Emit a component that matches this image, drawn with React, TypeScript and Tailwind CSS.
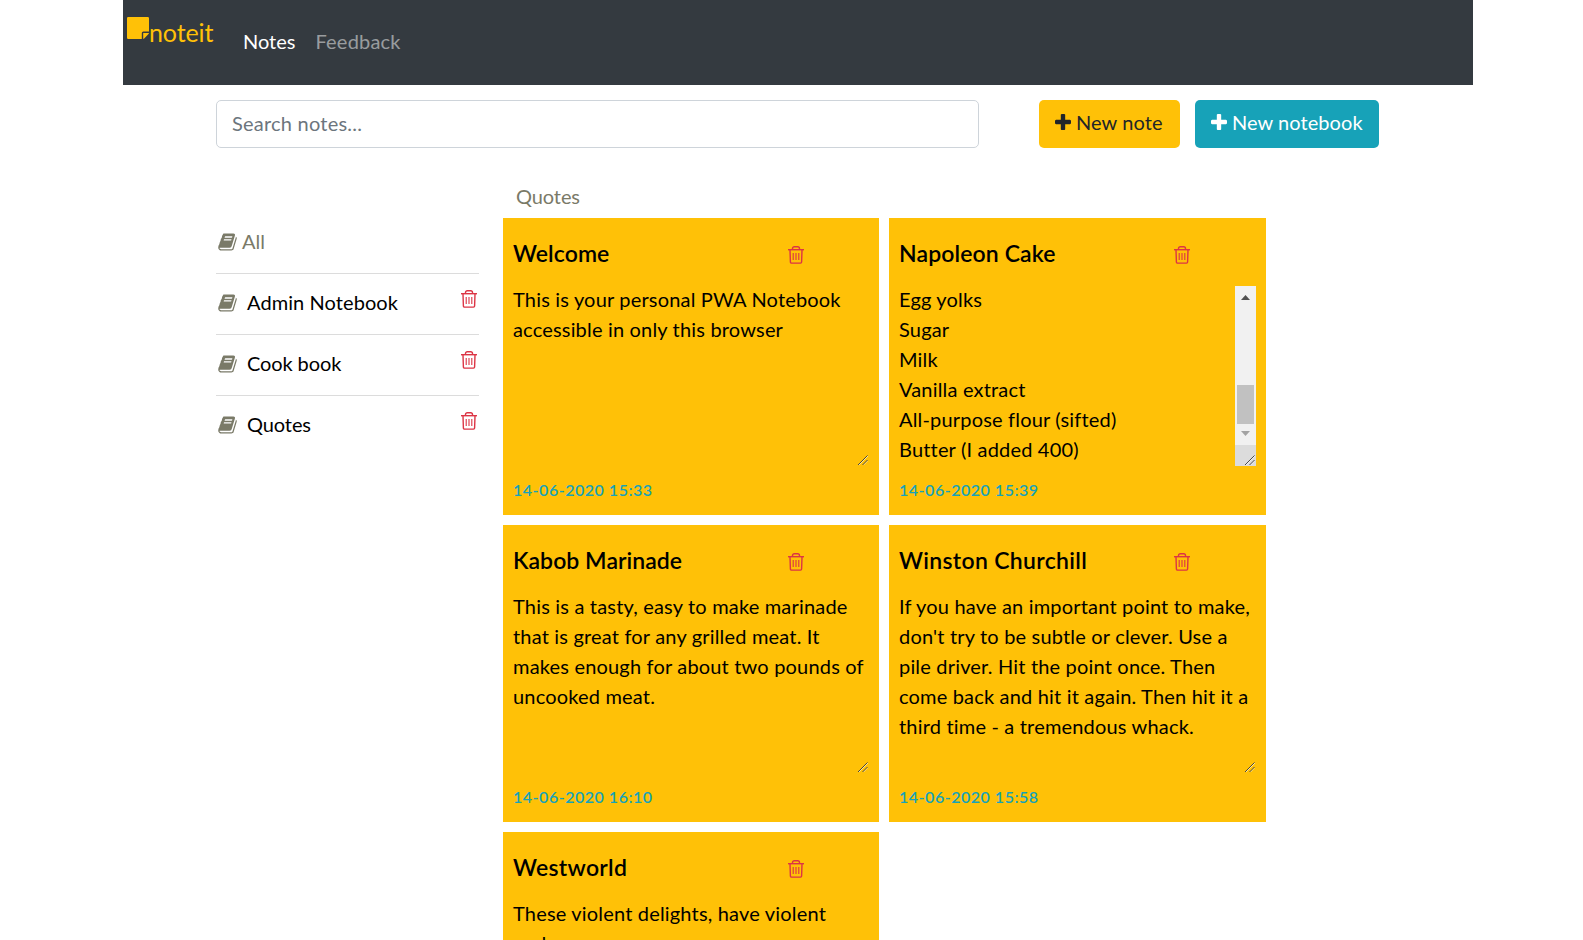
type IconProps = { className?: string };

function StickyNoteIcon({ className }: IconProps) {
  return (
    <svg viewBox="0 0 22 22" className={className} fill="currentColor" aria-hidden="true">
      <path d="M1.2 0h19.6A1.2 1.2 0 0 1 22 1.200V14.600h-5.700a1.500 1.500 0 0 0-1.500 1.500V22H1.200A1.200 1.200 0 0 1 0 20.800V1.200A1.200 1.200 0 0 1 1.200 0z" />
      <path d="M16.200 16H22a1.500 1.500 0 0 1-.5 1l-4.300 4.400a1.600 1.600 0 0 1-1 .5z" />
    </svg>
  );
}

function PlusIcon({ className }: IconProps) {
  return (
    <svg viewBox="192 192 1408 1408" className={className} fill="currentColor" aria-hidden="true">
      <path d="M1600 800v192q0 40-28 68t-68 28h-416v416q0 40-28 68t-68 28h-192q-40 0-68-28t-28-68v-416h-416q-40 0-68-28t-28-68v-192q0-40 28-68t68-28h416v-416q0-40 28-68t68-28h192q40 0 68 28t28 68v416h416q40 0 68 28t28 68z" />
    </svg>
  );
}

function BookIcon({ className }: IconProps) {
  return (
    <svg viewBox="0 0 1664 1792" className={className} fill="currentColor" aria-hidden="true">
      <path d="M1639 478q40 57 18 129l-275 906q-19 64-76.5 107.5t-122.5 43.5h-923q-77 0-148.5-53.5t-99.5-131.5q-24-67-2-127 0-4 3-27t4-37q1-8-3-21.5t-3-19.5q2-11 8-21t16.5-23.5 16.5-23.5q23-38 45-91.5t30-91.5q3-10 .5-30t-.5-28q3-11 17-28t17-23q21-36 42-92t25-90q1-9-2.5-32t.5-28q4-13 22-30.5t22-22.5q19-26 42.5-84.5t27.5-96.5q1-8-3-25.5t-2-26.5q2-8 9-18t18-23 17-21q8-12 16.5-30.5t15-35 16-36 19.5-32 26.5-23.5 36-11.5 47.5 5.5l-1 3q38-9 51-9h761q74 0 114 56t18 130l-274 906q-36 119-71.5 153.5t-128.5 34.5h-869q-27 0-38 15-11 16-1 43 24 70 144 70h923q29 0 56-15.5t35-41.5l300-987q7-22 5-57 38 15 59 43zm-1064 2q-4 13 2 22.5t20 9.5h608q13 0 25.5-9.5t16.5-22.5l21-64q4-13-2-22.5t-20-9.5h-608q-13 0-25.5 9.5t-16.5 22.5zm-83 256q-4 13 2 22.5t20 9.5h608q13 0 25.5-9.5t16.5-22.5l21-64q4-13-2-22.5t-20-9.5h-608q-13 0-25.5 9.5t-16.5 22.5z" />
    </svg>
  );
}

function TrashIcon({ className }: IconProps) {
  return (
    <svg viewBox="0 0 16 18" className={className} fill="none" stroke="currentColor" aria-hidden="true">
      <path d="M0 3.700h16" strokeWidth="1.400" />
      <path d="M4.500 3.600V2.500A1.800 1.800 0 0 1 6.300.7h3.400a1.800 1.800 0 0 1 1.800 1.800v1.100" strokeWidth="1.400" />
      <path d="M2 4l.4 12a1.100 1.100 0 0 0 1.100 1.100h9a1.100 1.100 0 0 0 1.100-1.100L14 4" strokeWidth="1.400" />
      <path d="M5.200 7v7M8 7v7M10.800 7v7" strokeWidth="1.100" />
    </svg>
  );
}

function ResizeGrip({ className }: IconProps) {
  return (
    <svg viewBox="0 0 11 11" className={className} fill="none" aria-hidden="true">
      <path d="M1 11L11 1M6 11l5-5" stroke="#fff" strokeOpacity="0.7" strokeWidth="1" />
      <path d="M0 11L10.5.5M5 11l5.5-5.5" stroke="#3a3a3a" strokeWidth="1" />
    </svg>
  );
}

function NoteScrollbar() {
  return (
    <div className="flex h-[180px] w-[21px] shrink-0 flex-col bg-[#f1f1f1]">
      <svg viewBox="0 0 21 21" className="h-[21px] w-[21px] shrink-0" aria-hidden="true">
        <path d="M6 14l4.5-5 4.5 5z" fill="#505050" />
      </svg>
      <div className="mx-[2px] mt-[78px] h-[39px] shrink-0 bg-[#c1c1c1]" />
      <svg viewBox="0 0 21 21" className="h-[21px] w-[21px] shrink-0" aria-hidden="true">
        <path d="M6 7l4.5 5L15 7z" fill="#a3a3a3" />
      </svg>
      <div className="flex h-[21px] items-end justify-end bg-[#dcdcdc] p-px">
        <ResizeGrip className="h-[10px] w-[10px]" />
      </div>
    </div>
  );
}

type Note = { title: string; titleSpacing: string; lines: string[]; date: string; scroll?: boolean };

const notes: Note[] = [
  {
    title: "Welcome",
    titleSpacing: "tracking-[0.1px]",
    lines: ["This is your personal PWA Notebook", "accessible in only this browser"],
    date: "14-06-2020 15:33",
  },
  {
    title: "Napoleon Cake",
    titleSpacing: "tracking-[0.12px]",
    lines: ["Egg yolks", "Sugar", "Milk", "Vanilla extract", "All-purpose flour (sifted)", "Butter (I added 400)"],
    date: "14-06-2020 15:39",
    scroll: true,
  },
  {
    title: "Kabob Marinade",
    titleSpacing: "tracking-[0.05px]",
    lines: [
      "This is a tasty, easy to make marinade",
      "that is great for any grilled meat. It",
      "makes enough for about two pounds of",
      "uncooked meat.",
    ],
    date: "14-06-2020 16:10",
  },
  {
    title: "Winston Churchill",
    titleSpacing: "tracking-[0.32px]",
    lines: [
      "If you have an important point to make,",
      "don't try to be subtle or clever. Use a",
      "pile driver. Hit the point once. Then",
      "come back and hit it again. Then hit it a",
      "third time - a tremendous whack.",
    ],
    date: "14-06-2020 15:58",
  },
  {
    title: "Westworld",
    titleSpacing: "tracking-[0.3px]",
    lines: ["These violent delights, have violent", "ends"],
    date: "14-06-2020 16:12",
  },
];

function NoteCard({ note }: { note: Note }) {
  return (
    <article className="flex h-[297px] flex-col bg-[#ffc107] px-[10px] pt-5 text-black">
      <div className="flex h-12 items-start">
        <h2 className={`w-[275px] text-[23px] leading-[30px] font-semibold ${note.titleSpacing}`}>{note.title}</h2>
        <button className="mt-2 text-[#dc3545]">
          <TrashIcon className="h-[18px] w-4" />
        </button>
      </div>
      <div className="flex h-[180px] shrink-0">
        <div className="-mt-[2px] grow leading-[30px] tracking-[0.18px] whitespace-nowrap">
          {note.lines.map((line) => (
            <p key={line}>{line}</p>
          ))}
        </div>
        {note.scroll ? <NoteScrollbar /> : <ResizeGrip className="mr-px mb-px -ml-[11px] h-[10px] w-[10px] self-end" />}
      </div>
      <time className="mt-3 text-[16px] leading-6 font-semibold tracking-[0.52px] text-[#17a2b8]">{note.date}</time>
    </article>
  );
}

const notebooks = [
  { name: "Admin Notebook", spacing: "tracking-[0.08px]" },
  { name: "Cook book", spacing: "tracking-[-0.1px]" },
  { name: "Quotes", spacing: "tracking-[-0.1px]" },
];

export default function App() {
  return (
    <div className="h-[940px] overflow-hidden bg-white font-['Lato','Liberation_Sans',sans-serif] text-[20px]">
      <div className="ml-[123px] w-[1350px]">
        <nav className="flex h-[85px] bg-[#343a40]">
          <a className="mt-[17px] ml-1 flex h-[34px] w-[88px] text-[#ffc107]">
            <StickyNoteIcon className="h-[22px] w-[22px] shrink-0" />
            <span className="text-[25px] leading-[30px] tracking-[-0.1px]">noteit</span>
          </a>
          <div className="mt-[26px] ml-[28px] flex gap-[20px] leading-[30px]">
            <a className="text-white">Notes</a>
            <a className="tracking-[0.2px] text-white/50">Feedback</a>
          </div>
        </nav>

        <div className="mt-[15px] ml-[93px] flex h-12 items-start">
          <input
            className="h-12 w-[763px] rounded-[5px] border border-[#ced4da] px-[15px] pb-[3px] leading-[30px] tracking-[0.22px] placeholder:text-[#6c757d]"
            placeholder="Search notes..."
          />
          <button className="ml-[60px] flex h-12 w-[141px] items-center rounded-[5px] bg-[#ffc107] pl-[16px] text-[#212529]">
            <PlusIcon className="mr-[5px] mb-[5px] h-4 w-4 shrink-0" />
            <span className="pb-[4px] tracking-[0.1px] whitespace-nowrap">New note</span>
          </button>
          <button className="ml-[15px] flex h-12 w-[184px] items-center rounded-[5px] bg-[#17a2b8] pl-[16px] text-white">
            <PlusIcon className="mr-[5px] mb-[5px] h-4 w-4 shrink-0" />
            <span className="pb-[4px] tracking-[0.06px] whitespace-nowrap">New notebook</span>
          </button>
        </div>

        <div className="ml-[93px] flex">
          <aside className="w-[263px] pt-[65px] leading-[30px]">
            <div className="flex h-[61px] border-b border-[#dcdcdc] pt-[13px] text-[#7a7a68]">
              <BookIcon className="mt-[6px] ml-[2px] h-5 w-[19px]" />
              <span className="ml-[5px]">All</span>
            </div>
            {notebooks.map(({ name, spacing }, i) => (
              <div key={name} className={`flex h-[61px] pt-[13px] ${i < 2 ? "border-b border-[#dcdcdc]" : ""}`}>
                <BookIcon className="mt-[6px] ml-[2px] h-5 w-[19px] text-[#7a7a68]" />
                <span className={`ml-[10px] grow text-black ${spacing}`}>{name}</span>
                <button className="mt-[3px] mr-[2px] h-[18px] text-[#dc3545]">
                  <TrashIcon className="h-[18px] w-4" />
                </button>
              </div>
            ))}
          </aside>
          <main className="ml-6 w-[763px] pt-[33px]">
            <h1 className="ml-[13px] h-[37px] leading-[30px] tracking-[-0.1px] text-[#7a7a68]">Quotes</h1>
            <div className="grid grid-cols-[376px_377px] gap-[10px]">
              {notes.map((note) => (
                <NoteCard key={note.title} note={note} />
              ))}
            </div>
          </main>
        </div>
      </div>
    </div>
  );
}
